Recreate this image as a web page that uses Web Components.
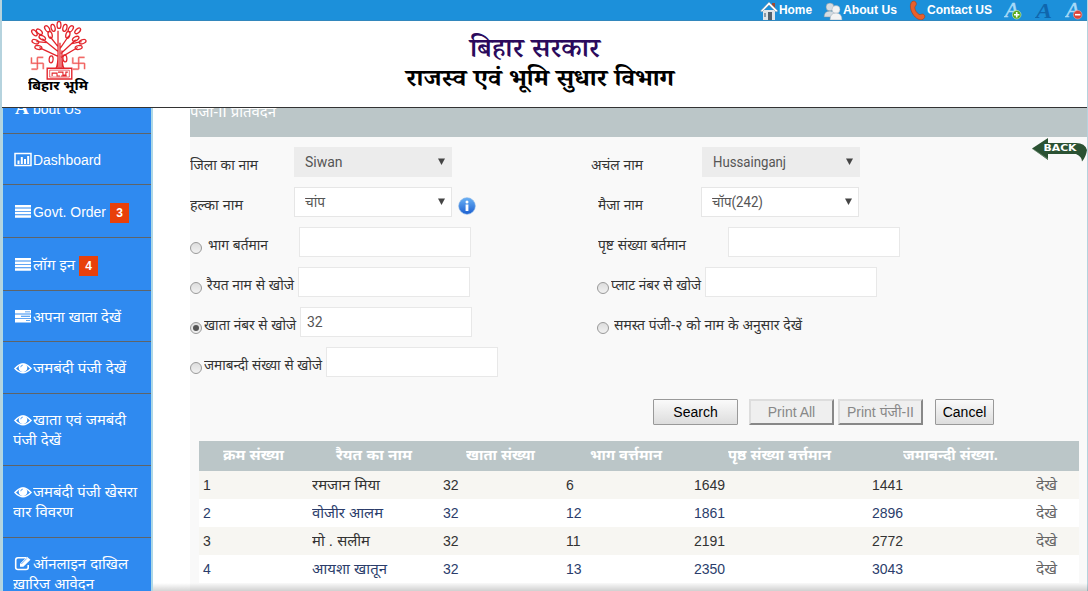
<!DOCTYPE html>
<html lang="hi">
<head>
<meta charset="utf-8">
<title>Bihar Bhumi</title>
<style>
html,body{margin:0;height:100%;overflow:hidden}
body{font:14px/20px "Liberation Sans","Noto Sans Devanagari","Noto Sans",sans-serif;color:#333;background:#fff}
</style>
</head>
<body>
<bhumi-app></bhumi-app>
<script>
const define=(name,html,setup)=>customElements.define(name,class extends HTMLElement{
  connectedCallback(){
    if(this.shadowRoot)return;
    const t=document.createElement('template');
    t.innerHTML=typeof html==='function'?html(this):html;
    this.attachShadow({mode:'open'}).append(t.content.cloneNode(true));
    if(setup)setup(this,this.shadowRoot);
  }
});

/* One line of text set to an exact measure (w, in pixels). */
define('fit-text',`<style>:host{display:inline-block;white-space:nowrap;flex:none;text-align:left}span{display:inline-block;transform-origin:0 50%}</style><span><slot></slot></span>`,(el,root)=>{
  const w=+el.getAttribute('w');if(!w)return;
  const s=root.querySelector('span');
  el.style.width=w+'px';
  const n=s.getBoundingClientRect().width;
  if(n)s.style.transform=`scaleX(${w/n})`;
});

define('size-letter',el=>`<style>:host{display:block;width:18px;height:20px}svg{display:block}text{font:italic 22px "Liberation Serif",serif}.n{font-weight:bold}</style>
<svg width="18" height="20" viewBox="0 0 18 20">${{
 plus:'<text x="1" y="17" fill="#a9dbf8" stroke="#a9dbf8" stroke-width=".5">A</text><circle cx="12.700" cy="14.700" r="4.300" fill="#58a81c" stroke="#d9f2b8" stroke-width=".6"/><path d="M10 14.700h5.400M12.700 12v5.400" stroke="#fff" stroke-width="1.600"/>',
 none:'<text class="n" x="1" y="18" textLength="16" lengthAdjust="spacingAndGlyphs" fill="#0f66ad">A</text>',
 minus:'<text x="1" y="17" fill="#a9dbf8" stroke="#a9dbf8" stroke-width=".5">A</text><circle cx="12.700" cy="14.700" r="4.300" fill="#dc4438" stroke="#f5a79f" stroke-width=".6"/><path d="M10 14.700h5.400" stroke="#fff" stroke-width="1.600"/>'
}[el.getAttribute('kind')]}</svg>`);

define('top-bar',`<style>
:host{display:flex;height:21px;box-sizing:border-box;background:#1c90da;border-bottom:1px solid #3287bd;color:#fff;font:bold 12px/20px "Liberation Sans",sans-serif;margin:0 1px 0 2px;padding-left:757px;overflow:hidden}
svg{display:block;flex:none}.c{margin-left:11px}
</style>
<svg width="20" height="20" viewBox="0 0 20 20"><path d="M13 3h3v5h-3z" fill="#9d4a32"/><path d="M4 10h12v10H4z" fill="#dfe5e9"/><path d="M1.500 11 10 2l9 9-2 1-7-7-7 7z" fill="#fff" stroke="#8196a6" stroke-width=".6"/><path d="M9 12h4v8H9z" fill="#52616d"/><path d="M5 13h2v4H5z" fill="#8b9ba8"/></svg>
<fit-text w="33">Home</fit-text>
<svg class="c" width="20" height="20" viewBox="0 0 20 20"><g fill="#d4dce2" stroke="#778e9d" stroke-width=".5"><circle cx="7" cy="7" r="4"/><path d="M1 17q0-6 6-6t6 6z"/></g><g fill="#f4f4f4" stroke="#9aa9b4" stroke-width=".5"><circle cx="13" cy="9.500" r="4"/><path d="M7 20q0-7 6-7t6 7z"/></g></svg>
<fit-text w="54">About Us</fit-text>
<svg class="c" width="19" height="20" viewBox="0 0 19 20"><path d="M4 1.500c2-1 4-.3 4.300 2 .2 2-1.300 2.700-1.500 4 0 2.500 2 5.700 4.500 7 1.500.5 2.500-1 4.200-.2 2 1.400 1.600 3.500-.5 5-3 1.800-7.500-1-10-5C2 10 1.500 4 4 1.500z" fill="#e8602a" stroke="#a83a12" stroke-width=".6"/></svg>
<fit-text w="65">Contact US</fit-text>
<size-letter kind="plus" style="margin-left:12px"></size-letter>
<size-letter kind="none" style="margin-left:13px"></size-letter>
<size-letter kind="minus" style="margin-left:12px"></size-letter>`);

define('bhumi-logo',()=>{
  const leaf=(x,y,r)=>`<ellipse rx="2" ry="3.600" transform="translate(${x} ${y}) rotate(${r})"/>`;
  const leaves=[[32,4,0],[26,7,-15],[38,7,15],[20,8,-35],[44,8,35],[12,11,-50],[51,10,45],[7,12,-40],[23,14,-15],[41,14,15],[15,17,-60],[49,18,60],[8,21,-70],[56,21,70],[11,27,-80],[52,27,80],[24,39,5],[38,38,-5]];
  const d=x=>`M${x} 37v6h12M${x+6} 37v12M${x+6} 37h6M${x+12} 43v6M${x} 49h6`;
  const sw=x=>`<path d="${d(x)}" stroke-width="2.200" stroke="#f9bdb9"/><path d="${d(x)}" stroke="#e44" stroke-width=".8"/>`;
  return `<style>:host{display:block;width:66px;color:#000;font:bold 12px/16px "Noto Sans Devanagari","Noto Sans",sans-serif}svg{display:block;margin-left:3px}fit-text{display:block;margin:-1px 0 0 4px}</style>
<svg width="64" height="59" viewBox="0 0 64 60" fill="none" stroke="#e3242b" stroke-width="1.300">
${leaves.map(l=>leaf(...l)).join('')}
<path d="M31 48V10M33 48V22M35 48V30M31 26 23 16M31 31 15 18M31 36 12 27M33 28l9-13M34 33l15-14M34 37l17-10M20 22 9 21M45 23l10-2M29 48c2-4 2-10 2-14M37 48c-2-4-2-9-2-14"/>
${sw(4)}${sw(46)}
<path d="M20 48h25v11H20z" stroke-width="1.400"/><path d="M22.500 50h20v7h-20z" stroke-width=".7"/><path d="M25 56v-3h5v3h3M31 52h5v3h3v-3h2M34 56h6" stroke-width="1.100"/></svg>
<fit-text w="60">बिहार भूमि</fit-text>`;
});

define('site-header',`<style>
:host{display:grid;grid-template-columns:66px 1fr;height:87px;box-sizing:border-box;border-bottom:1px solid #333;margin-left:2px;padding-left:22px;background:#fff}
.t{display:flex;flex-direction:column;align-items:center;padding:16px 106px 0 0;font-family:"Noto Serif Devanagari","Noto Sans Devanagari","Liberation Serif",serif}
.a{font-size:27px;line-height:32px;font-weight:600;color:#2b0a5c;margin-right:2px}.b{font-size:24px;line-height:28px;font-weight:bold;color:#000;margin-left:8px}
</style>
<bhumi-logo></bhumi-logo><div class="t"><fit-text class="a" w="130">बिहार सरकार</fit-text><fit-text class="b" w="268">राजस्व एवं भूमि सुधार विभाग</fit-text></div>`);

const ICONS={
 chart:'<path d="M1 1.500h16v12H1z" fill="none" stroke="#fff" stroke-width="1.500"/><path d="M3.500 8.500h2v3.500h-2zM6.800 5h2v7h-2zM10 7h2v5h-2zM13.200 4h2v8h-2z"/>',
 bars:'<path d="M1 1h16v2.500H1zM1 4.400h16v2.500H1zM1 7.800h16v2.500H1zM1 11.200h16v2.500H1z"/>',
 tasks:'<path d="M1 1h16v3.600H1zM1 5.400h16v3.600H1zM1 9.800h16v3.600H1z"/><path d="M11 2.400h5v.9h-5zM7 6.800h9v.9H7zM12 11.200h4v.9h-4z" fill="#2f8af0"/>',
 eye:'<path d="M1 8.500Q9-.5 17 8.500 9 17 1 8.500z" fill="none" stroke="#fff" stroke-width="1.500"/><circle cx="9" cy="7.800" r="4.300"/><path d="M6.800 7.200q0-2 2-2" fill="none" stroke="#2f8af0" stroke-width=".8"/>',
 edit:'<path d="M12 1.700H4Q1.700 1.700 1.700 4v7.500q0 2 2.300 2h8q2.200 0 2.200-2V9" fill="none" stroke="#fff" stroke-width="1.600"/><path d="m6 7.700 7-7 3.500 3-7.200 7H6z"/><path d="m7.300 8 5.500-5.500" stroke="#2f8af0" stroke-width=".7"/>'
};
define('menu-item',el=>`<style>
:host{display:block;box-sizing:border-box;height:${el.getAttribute('h')}px;border-bottom:1px solid #5f6468;padding:${el.getAttribute('top')||16}px 0 0 10px;color:#fff;font-size:14px;line-height:20px;white-space:nowrap}
svg{vertical-align:-2px;margin-left:1px}
b{display:inline-block;width:19px;height:20px;background:#e8400a;font-size:12px;line-height:20px;text-align:center;margin-left:4px}
</style>${el.getAttribute('icon')?`<svg width="19" height="15" viewBox="0 0 19 15" fill="#fff">${ICONS[el.getAttribute('icon')]}</svg>`:''}<slot></slot>${el.getAttribute('badge')?`<b>${el.getAttribute('badge')}</b>`:''}`);

define('side-menu',`<style>
:host{display:block;background:#2f8af0;border:solid #add8e6;border-width:0 2px 0 3px;box-sizing:border-box;width:153px;height:483px;overflow:hidden}
i{font:bold 19px/20px "Liberation Serif",serif}
</style>
<menu-item h="53" top="17" style="margin-top:-27px"><i style="font-style:normal;margin-left:2px">A</i> <fit-text w="48">bout Us</fit-text></menu-item>
<menu-item h="51" icon="chart"><fit-text w="68">Dashboard</fit-text></menu-item>
<menu-item h="53" icon="bars" top="17" badge="3"><fit-text w="73">Govt. Order</fit-text></menu-item>
<menu-item h="53" icon="bars" top="17" badge="4"><fit-text w="42">लॉग इन</fit-text></menu-item>
<menu-item h="51" icon="tasks"><fit-text w="88">अपना खाता देखें</fit-text></menu-item>
<menu-item h="52" icon="eye"><fit-text w="93">जमबंदी पंजी देखें</fit-text></menu-item>
<menu-item h="72" icon="eye"><fit-text w="93">खाता एवं जमबंदी</fit-text><br><fit-text w="48">पंजी देखें</fit-text></menu-item>
<menu-item h="72" icon="eye"><fit-text w="104">जमबंदी पंजी खेसरा</fit-text><br><fit-text w="60">वार विवरण</fit-text></menu-item>
<menu-item h="72" icon="edit"><fit-text w="95">ऑनलाइन दाखिल</fit-text><br><fit-text w="81">ख़ारिज आवेदन</fit-text></menu-item>`);

define('select-box',`<style>
:host{display:flex;justify-content:space-between;box-sizing:border-box;width:158px;height:30px;border:1px solid #e6e6e6;background:#fff;padding:0 6px 0 10px;font:14px/28px Roboto,"Noto Sans Devanagari",sans-serif;color:#555;flex:none}
:host([disabled]){background:#ececec;border-color:#ececec}
svg{margin-top:10px}fit-text{display:block}
</style><span><slot></slot></span><svg width="7" height="8" viewBox="0 0 7 8"><path d="M0 .5h7L3.500 7z" fill="#444"/></svg>`);

define('text-box',`<style>:host{display:block;box-sizing:border-box;width:172px;height:30px;border:1px solid #e8e8e8;background:#fff;padding-left:6px;font:14px/28px Roboto,sans-serif;color:#555;flex:none}</style><slot></slot>`);

define('radio-dot',`<style>:host{display:grid;place-items:center;box-sizing:border-box;width:12px;height:12px;border:1px solid #999;border-radius:50%;background:linear-gradient(#ddd,#f1f1f1);flex:none}
i{width:6px;height:6px;border-radius:50%}:host([checked]) i{background:#555}</style><i></i>`);

define('info-dot',`<style>:host{display:block;width:18px;height:18px;margin:10px 0 0 6px}svg{display:block}</style>
<svg width="18" height="18"><defs><linearGradient id="g" x2="0" y2="1"><stop stop-color="#69b1f5"/><stop offset="1" stop-color="#1c5fd0"/></linearGradient></defs><circle cx="9" cy="9" r="8.300" fill="url(#g)" stroke="#7fb0e6" stroke-width=".6"/><path d="M7.600 7.500h2.800V14H7.600z" fill="#fff"/><circle cx="9" cy="5" r="1.500" fill="#fff"/></svg>`);

/* A form row: the two slots are the left and right halves. */
define('form-row',`<style>:host{display:grid;grid-template-columns:400px 1fr;height:40px}div{display:flex;align-items:flex-start;padding-top:5px;box-sizing:border-box;height:40px}</style><div><slot name="l"></slot></div><div><slot name="r"></slot></div>`);

define('push-button',el=>`<style>:host{display:block;box-sizing:border-box;width:${el.getAttribute('w')}px;height:26px;border:1px solid #999;background:linear-gradient(#fafafa,#ddd);font-size:14px;line-height:24px;text-align:center;color:#000;border-radius:1px}
:host([disabled]){border:2px solid;border-color:#ddd #888 #888 #ddd;background:#efefef;color:#888;line-height:22px;border-radius:0}</style><slot></slot>`);

define('back-arrow',`<style>:host{display:block;width:55px;height:25px}svg{display:block}text{font:bold 8px "DejaVu Sans",sans-serif}</style>
<svg width="55" height="25" viewBox="0 0 55 25"><path d="M0 11.500 16 1v5h28q9 0 11 7-1 7-5 11.500 0-5-6-7.500H16v6z" fill="#2b5233"/><path d="m0 11.500 16 10.500" stroke="#7f9a82" stroke-width=".6"/><text x="11.500" y="14.300" textLength="33" lengthAdjust="spacingAndGlyphs" fill="#fff">BACK</text></svg>`);

define('record-table',()=>{
 const rows=[['1','रमजान मिया',68,'32','6','1649','1441'],['2','वोजीर आलम',71,'32','12','1861','2896'],['3','मो . सलीम',58,'32','11','2191','2772'],['4','आयशा खातून',75,'32','13','2350','3043']];
 const heads=[['क्रम संख्या',61],['रैयत का नाम',76],['खाता संख्या',69],['भाग वर्त्तमान',72],['पृष्ठ संख्या वर्त्तमान',103],['जमाबन्दी संख्या.',95]];
 return `<style>:host{display:block;margin:16px 8px 0 9px}
.r{display:grid;grid-template-columns:109px 131px 123px 128px 178px 164px 47px;height:28px;line-height:28px;background:#fff;color:#2b3d6b}
.r:nth-of-type(even){background:#f7f6f2;color:#333}
.r.h{height:30px;line-height:28px;background:#bbc6c8;color:#fff;font-size:15px;font-weight:bold;text-align:center}
.r span{padding-left:4px}.r.h span{padding:0}.v{color:#666}</style>
<div class="r h">${heads.map(h=>`<span><fit-text w="${h[1]}">${h[0]}</fit-text></span>`).join('')}</div>
${rows.map(r=>`<div class="r"><span>${r[0]}</span><span><fit-text w="${r[2]}">${r[1]}</fit-text></span>${r.slice(3).map(c=>`<span>${c}</span>`).join('')}<span class="v"><fit-text w="21">देखे</fit-text></span></div>`).join('')}`;
});

define('report-panel',`<style>
:host{display:block;background:#f9f9f9;margin-left:37px;height:483px;width:897px;overflow:hidden;position:relative}
.title{height:29px;overflow:hidden;background:#bbc6c8;color:#fff}
.title fit-text{display:block;margin-top:-6px}
.rows{padding-top:5px}.c{display:contents}
.l{line-height:20px;margin-top:8px;color:#333}
.btns{display:flex;padding:17px 0 0 463px}
radio-dot{margin-top:15px}
back-arrow{position:absolute;left:842px;top:29px}
</style>
<div class="title"><fit-text w="86">पंजी-II प्रतिवेदन</fit-text></div>
<back-arrow></back-arrow>
<div class="rows">
<form-row><div slot="l" class="c"><fit-text class="l" w="68">जिला का नाम</fit-text><select-box disabled style="margin-left:36px">Siwan</select-box></div><div slot="r" class="c"><fit-text class="l" w="52" style="margin-left:1px">अचंल नाम</fit-text><select-box disabled style="margin-left:59px"><fit-text w="73">Hussainganj</fit-text></select-box></div></form-row>
<form-row><div slot="l" class="c"><fit-text class="l" w="53">हल्का नाम</fit-text><select-box style="margin-left:51px"><fit-text w="20">चांप</fit-text></select-box><info-dot></info-dot></div><div slot="r" class="c"><fit-text class="l" w="45" style="margin-left:8px">मैजा नाम</fit-text><select-box style="margin-left:58px"><fit-text w="51">चॉप(242)</fit-text></select-box></div></form-row>
<form-row><div slot="l" class="c"><radio-dot></radio-dot><fit-text class="l" w="60" style="margin-left:6px">भाग बर्तमान</fit-text><text-box style="margin-left:31px"></text-box></div><div slot="r" class="c"><fit-text class="l" w="88" style="margin-left:8px">पृष्ट संख्या बर्तमान</fit-text><text-box style="margin-left:42px"></text-box></div></form-row>
<form-row><div slot="l" class="c"><radio-dot></radio-dot><fit-text class="l" w="87" style="margin-left:5px">रैयत नाम से खोजे</fit-text><text-box style="margin-left:4px"></text-box></div><div slot="r" class="c"><radio-dot style="margin:15px 2px 0 7px"></radio-dot><fit-text class="l" w="90">प्लाट नंबर से खोजे</fit-text><text-box style="margin-left:4px"></text-box></div></form-row>
<form-row><div slot="l" class="c"><radio-dot checked></radio-dot><fit-text class="l" w="92" style="margin-left:2px">खाता नंबर से खोजे</fit-text><text-box style="margin-left:4px">32</text-box></div><div slot="r" class="c"><radio-dot style="margin:15px 5px 0 7px"></radio-dot><fit-text class="l" w="188">समस्त पंजी-२ को नाम के अनुसार देखें</fit-text></div></form-row>
<form-row><div slot="l" class="c"><radio-dot></radio-dot><fit-text class="l" w="118" style="margin-left:2px">जमाबन्दी संख्या से खोजे</fit-text><text-box style="margin-left:4px"></text-box></div></form-row>
</div>
<div class="btns"><push-button w="85">Search</push-button><push-button w="85" disabled style="margin-left:11px">Print All</push-button><push-button w="85" disabled style="margin-left:4px"><fit-text w="67">Print पंजी-II</fit-text></push-button><push-button w="59" style="margin-left:12px">Cancel</push-button></div>
<record-table></record-table>`);

define('bhumi-app',`<style>
:host{display:block;position:relative;width:1088px;height:591px;box-sizing:border-box;overflow:hidden;background:#fff}
.m{display:flex}
.edge{position:absolute;top:0;bottom:0;width:1px;background:#b5d3de}
.shade{position:absolute;left:153px;right:0;bottom:0;height:8px;background:linear-gradient(#0000,#0000002a)}
</style>
<top-bar></top-bar><site-header></site-header>
<div class="m"><side-menu></side-menu><report-panel></report-panel></div>
<div class="edge" style="left:0;width:2px"></div><div class="edge" style="right:0"></div><div class="shade"></div>`);
</script>
</body>
</html>
